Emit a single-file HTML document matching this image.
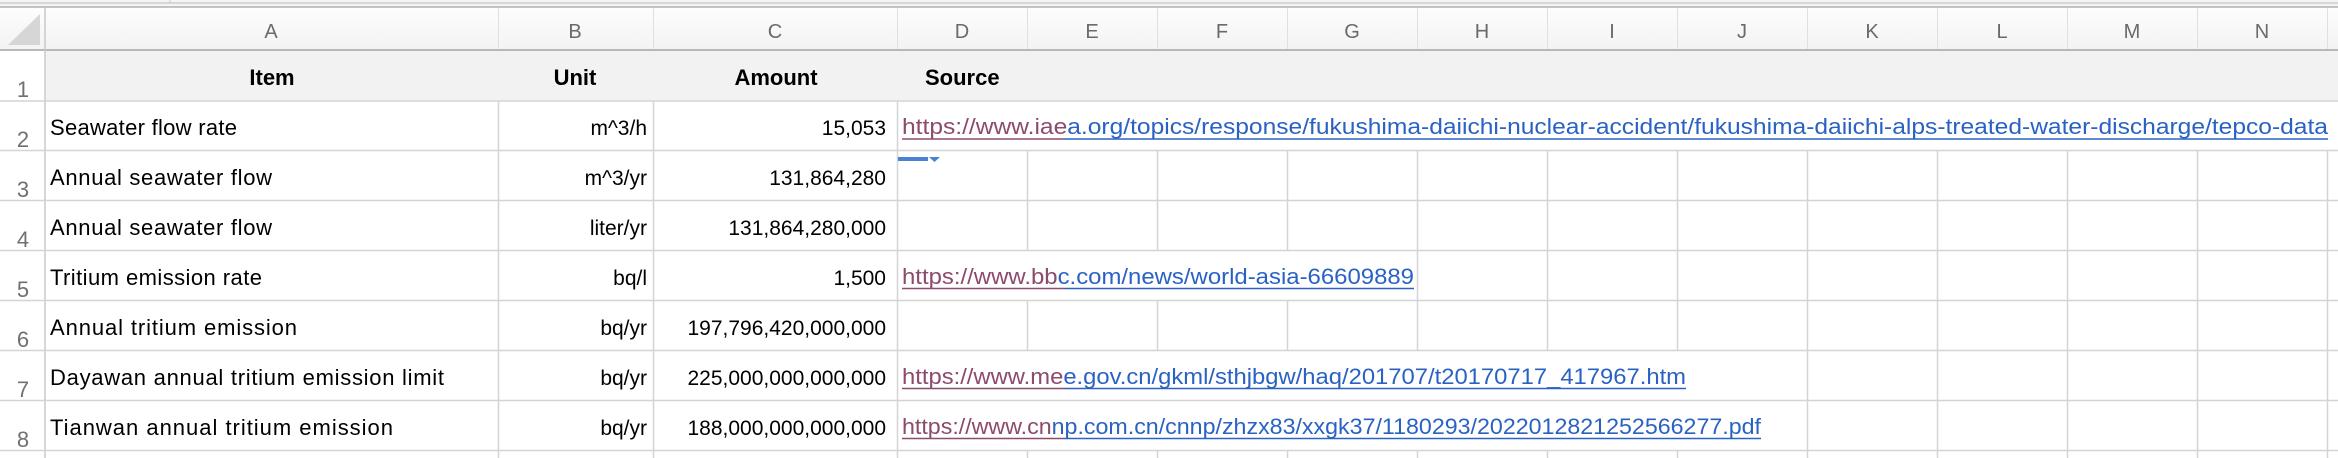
<!DOCTYPE html>
<html><head><meta charset="utf-8"><style>
html,body{margin:0;padding:0;background:#fff;overflow:hidden}
svg{display:block}
text{font-family:"Liberation Sans",Arial,sans-serif}
</style></head><body>
<svg width="2338" height="458" viewBox="0 0 2338 458" xmlns="http://www.w3.org/2000/svg">
<defs><linearGradient id="hg" x1="0" y1="0" x2="0" y2="1"><stop offset="0" stop-color="#fdfdfd"/><stop offset="1" stop-color="#f3f3f3"/></linearGradient></defs>
<rect x="0" y="0" width="2338" height="458" fill="#fff"/>
<rect x="0" y="0" width="2338" height="7" fill="#f4f4f4"/>
<line x1="0" y1="3" x2="2338" y2="3" stroke="#b8b8b8" stroke-width="1"/>
<line x1="0" y1="7" x2="2338" y2="7" stroke="#b0b0b0" stroke-width="1.5"/>
<line x1="170" y1="0" x2="170" y2="3" stroke="#c8c8c8"/>
<rect x="0" y="8" width="2338" height="42" fill="url(#hg)"/>
<polygon points="40,14 40,45 8,45" fill="#d6d6d6"/>
<g stroke="#e0e0e0" stroke-width="1">
<line x1="498.5" y1="8" x2="498.5" y2="50"/><line x1="653.5" y1="8" x2="653.5" y2="50"/><line x1="897.5" y1="8" x2="897.5" y2="50"/>
<line x1="1027.5" y1="8" x2="1027.5" y2="50"/><line x1="1157.5" y1="8" x2="1157.5" y2="50"/><line x1="1287.5" y1="8" x2="1287.5" y2="50"/>
<line x1="1417.5" y1="8" x2="1417.5" y2="50"/><line x1="1547.5" y1="8" x2="1547.5" y2="50"/><line x1="1677.5" y1="8" x2="1677.5" y2="50"/>
<line x1="1807.5" y1="8" x2="1807.5" y2="50"/><line x1="1937.5" y1="8" x2="1937.5" y2="50"/><line x1="2067.5" y1="8" x2="2067.5" y2="50"/>
<line x1="2197.5" y1="8" x2="2197.5" y2="50"/><line x1="2327.5" y1="8" x2="2327.5" y2="50"/>
</g>
<g fill="#6a6a6a" font-size="20" text-anchor="middle">
<text x="271" y="38">A</text><text x="575" y="38">B</text><text x="775" y="38">C</text><text x="962" y="38">D</text>
<text x="1092" y="38">E</text><text x="1222" y="38">F</text><text x="1352" y="38">G</text><text x="1482" y="38">H</text>
<text x="1612" y="38">I</text><text x="1742" y="38">J</text><text x="1872" y="38">K</text><text x="2002" y="38">L</text>
<text x="2132" y="38">M</text><text x="2262" y="38">N</text>
</g>
<line x1="0" y1="50" x2="2338" y2="50" stroke="#b8b8b8" stroke-width="2"/>
<rect x="46" y="51" width="2292" height="50" fill="#f2f2f2"/>
<g font-size="22" font-weight="bold" fill="#000">
<text x="272" y="85" text-anchor="middle">Item</text>
<text x="575" y="85" text-anchor="middle">Unit</text>
<text x="776" y="85" text-anchor="middle">Amount</text>
<text x="925" y="85">Source</text>
</g>
<line x1="45" y1="7" x2="45" y2="458" stroke="#c8c8c8" stroke-width="1.5"/>
<g stroke="#d4d4d4" stroke-width="1.5">
<line x1="0" y1="101" x2="2338" y2="101"/><line x1="0" y1="150.5" x2="2338" y2="150.5"/><line x1="0" y1="200.5" x2="2338" y2="200.5"/>
<line x1="0" y1="250.5" x2="2338" y2="250.5"/><line x1="0" y1="300.5" x2="2338" y2="300.5"/><line x1="0" y1="350.5" x2="2338" y2="350.5"/>
<line x1="0" y1="400.5" x2="2338" y2="400.5"/><line x1="0" y1="450.5" x2="2338" y2="450.5"/>
</g>
<g stroke="#d4d4d4" stroke-width="1.5">
<line x1="498.5" y1="101" x2="498.5" y2="458"/><line x1="653.5" y1="101" x2="653.5" y2="458"/><line x1="897.5" y1="101" x2="897.5" y2="458"/>
<line x1="1027.5" y1="150" x2="1027.5" y2="250"/><line x1="1157.5" y1="150" x2="1157.5" y2="250"/><line x1="1287.5" y1="150" x2="1287.5" y2="250"/>
<line x1="1417.5" y1="150" x2="1417.5" y2="350"/><line x1="1547.5" y1="150" x2="1547.5" y2="350"/><line x1="1677.5" y1="150" x2="1677.5" y2="350"/>
<line x1="1807.5" y1="150" x2="1807.5" y2="458"/><line x1="1937.5" y1="150" x2="1937.5" y2="458"/><line x1="2067.5" y1="150" x2="2067.5" y2="458"/>
<line x1="2197.5" y1="150" x2="2197.5" y2="458"/><line x1="2327.5" y1="150" x2="2327.5" y2="458"/>
<line x1="1027.5" y1="300" x2="1027.5" y2="350"/><line x1="1157.5" y1="300" x2="1157.5" y2="350"/><line x1="1287.5" y1="300" x2="1287.5" y2="350"/>
<line x1="1027.5" y1="450" x2="1027.5" y2="458"/><line x1="1157.5" y1="450" x2="1157.5" y2="458"/><line x1="1287.5" y1="450" x2="1287.5" y2="458"/>
<line x1="1417.5" y1="450" x2="1417.5" y2="458"/><line x1="1547.5" y1="450" x2="1547.5" y2="458"/><line x1="1677.5" y1="450" x2="1677.5" y2="458"/>
</g>
<g fill="#707070" font-size="22" text-anchor="middle">
<text x="23" y="97">1</text><text x="23" y="147">2</text><text x="23" y="197">3</text><text x="23" y="247">4</text>
<text x="23" y="297">5</text><text x="23" y="347">6</text><text x="23" y="397">7</text><text x="23" y="447">8</text>
</g>
<g fill="#000" font-size="22">
<text x="50" y="135" textLength="187" lengthAdjust="spacing">Seawater flow rate</text>
<text x="50" y="185" textLength="222" lengthAdjust="spacing">Annual seawater flow</text>
<text x="50" y="235" textLength="222" lengthAdjust="spacing">Annual seawater flow</text>
<text x="50" y="285" textLength="212" lengthAdjust="spacing">Tritium emission rate</text>
<text x="50" y="335" textLength="247" lengthAdjust="spacing">Annual tritium emission</text>
<text x="50" y="385" textLength="394" lengthAdjust="spacing">Dayawan annual tritium emission limit</text>
<text x="50" y="435" textLength="343" lengthAdjust="spacing">Tianwan annual tritium emission</text>
</g>
<g fill="#000" font-size="21" text-anchor="end">
<text x="647" y="135">m^3/h</text><text x="647" y="185">m^3/yr</text><text x="647" y="235">liter/yr</text>
<text x="647" y="285">bq/l</text><text x="647" y="335">bq/yr</text><text x="647" y="385">bq/yr</text><text x="647" y="435">bq/yr</text>
<text x="886" y="135">15,053</text><text x="886" y="185">131,864,280</text><text x="886" y="235">131,864,280,000</text>
<text x="886" y="285">1,500</text><text x="886" y="335">197,796,420,000,000</text><text x="886" y="385">225,000,000,000,000</text>
<text x="886" y="435">188,000,000,000,000</text>
</g>
<g font-size="22">
<text x="902" y="134" textLength="1426" lengthAdjust="spacingAndGlyphs" fill="#2a62c4"><tspan fill="#8c4a6c">https://www.iae</tspan>a.org/topics/response/fukushima-daiichi-nuclear-accident/fukushima-daiichi-alps-treated-water-discharge/tepco-data</text>
<text x="902" y="284" textLength="512" lengthAdjust="spacingAndGlyphs" fill="#2a62c4"><tspan fill="#8c4a6c">https://www.bb</tspan>c.com/news/world-asia-66609889</text>
<text x="902" y="384" textLength="784" lengthAdjust="spacingAndGlyphs" fill="#2a62c4"><tspan fill="#8c4a6c">https://www.me</tspan>e.gov.cn/gkml/sthjbgw/haq/201707/t20170717_417967.htm</text>
<text x="902" y="434" textLength="859" lengthAdjust="spacingAndGlyphs" fill="#2a62c4"><tspan fill="#8c4a6c">https://www.cn</tspan>np.com.cn/cnnp/zhzx83/xxgk37/1180293/2022012821252566277.pdf</text>
</g>
<g stroke-width="1.6">
<line x1="902" y1="139" x2="1063" y2="139" stroke="#8c4a6c"/><line x1="1063" y1="139" x2="2328" y2="139" stroke="#2a62c4"/>
<line x1="902" y1="288.5" x2="1064" y2="288.5" stroke="#8c4a6c"/><line x1="1064" y1="288.5" x2="1414" y2="288.5" stroke="#2a62c4"/>
<line x1="902" y1="388.5" x2="1064" y2="388.5" stroke="#8c4a6c"/><line x1="1064" y1="388.5" x2="1686" y2="388.5" stroke="#2a62c4"/>
<line x1="902" y1="438.5" x2="1064" y2="438.5" stroke="#8c4a6c"/><line x1="1064" y1="438.5" x2="1761" y2="438.5" stroke="#2a62c4"/>
</g>
<rect x="898" y="157" width="30" height="4" fill="#4a80d6"/>
<polygon points="929,157 940,157 934.5,162" fill="#4a80d6"/>
</svg>
</body></html>
